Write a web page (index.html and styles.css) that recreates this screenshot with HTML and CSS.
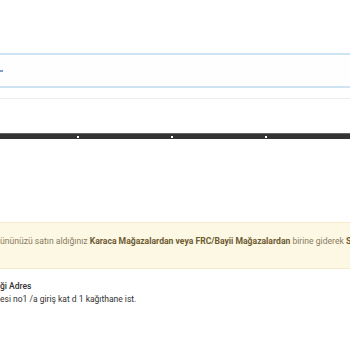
FILE: index.html
```html
<!DOCTYPE html>
<html lang="tr">
<head>
    <meta charset="UTF-8">
    <meta name="viewport" content="width=device-width, initial-scale=1.0">
    <title>Garanti Belgesi</title>
    <link rel="stylesheet" href="styles.css">
</head>
<body>
    <div class="page">
        <div class="search-box">
            <span class="caret"></span>
        </div>
        <div class="divider"></div>

        <div class="slider">
            <div class="slider-bar">
                <span class="dot"></span>
                <span class="dot"></span>
                <span class="dot"></span>
            </div>
        </div>

        <div class="alert">
            ününüzü satın aldığınız <b>Karaca Mağazalardan veya FRC/Bayii Mağazalardan</b> birine giderek <b>Se</b>
        </div>

        <div class="address">
            <div class="address-title">ği Adres</div>
            <div class="address-text">esi no1 /a giriş kat d 1 kağıthane ist.</div>
        </div>
    </div>
</body>
</html>
```

FILE: styles.css
```css
body {
    margin: 0;
    background: #fff;
    font-family: Roboto, "Noto Sans", sans-serif;
    color: #333;
    overflow: hidden;
}

.page {
    width: 350px;
    padding-top: 53px;
}

.search-box {
    height: 31px;
    border-top: 2px solid #cfe4f3;
    border-bottom: 2px solid #cfe4f3;
    background: #fefefe;
    display: flex;
    align-items: center;
}

.caret {
    display: block;
    width: 3px;
    height: 2px;
    background: #7d9fd0;
}

.divider {
    margin-top: 10px;
    height: 1px;
    background: #ececec;
}

.slider {
    padding-top: 34px;
}

.slider-bar {
    height: 4px;
    background: #333;
    border-top: 1px solid #666;
    display: flex;
    align-items: flex-end;
    gap: 92px;
    padding-left: 77px;
    padding-bottom: 1px;
    box-sizing: content-box;
}

.dot {
    width: 2px;
    height: 2px;
    background: #fff;
}

.alert {
    margin-top: 83px;
    height: 37px;
    padding-bottom: 8px;
    background: #fcf8e3;
    border-top: 1px solid #f5ebcc;
    border-bottom: 1px solid #f5ebcc;
    color: #8a7a5e;
    font-size: 8.6px;
    line-height: 37px;
    white-space: nowrap;
    overflow: hidden;
}

.alert b {
    color: #6e5a32;
    font-weight: bold;
}

.address {
    margin-top: 11px;
    font-size: 8.5px;
    line-height: 13px;
    color: #333;
    white-space: nowrap;
}

.address-title {
    font-weight: 500;
}
```
